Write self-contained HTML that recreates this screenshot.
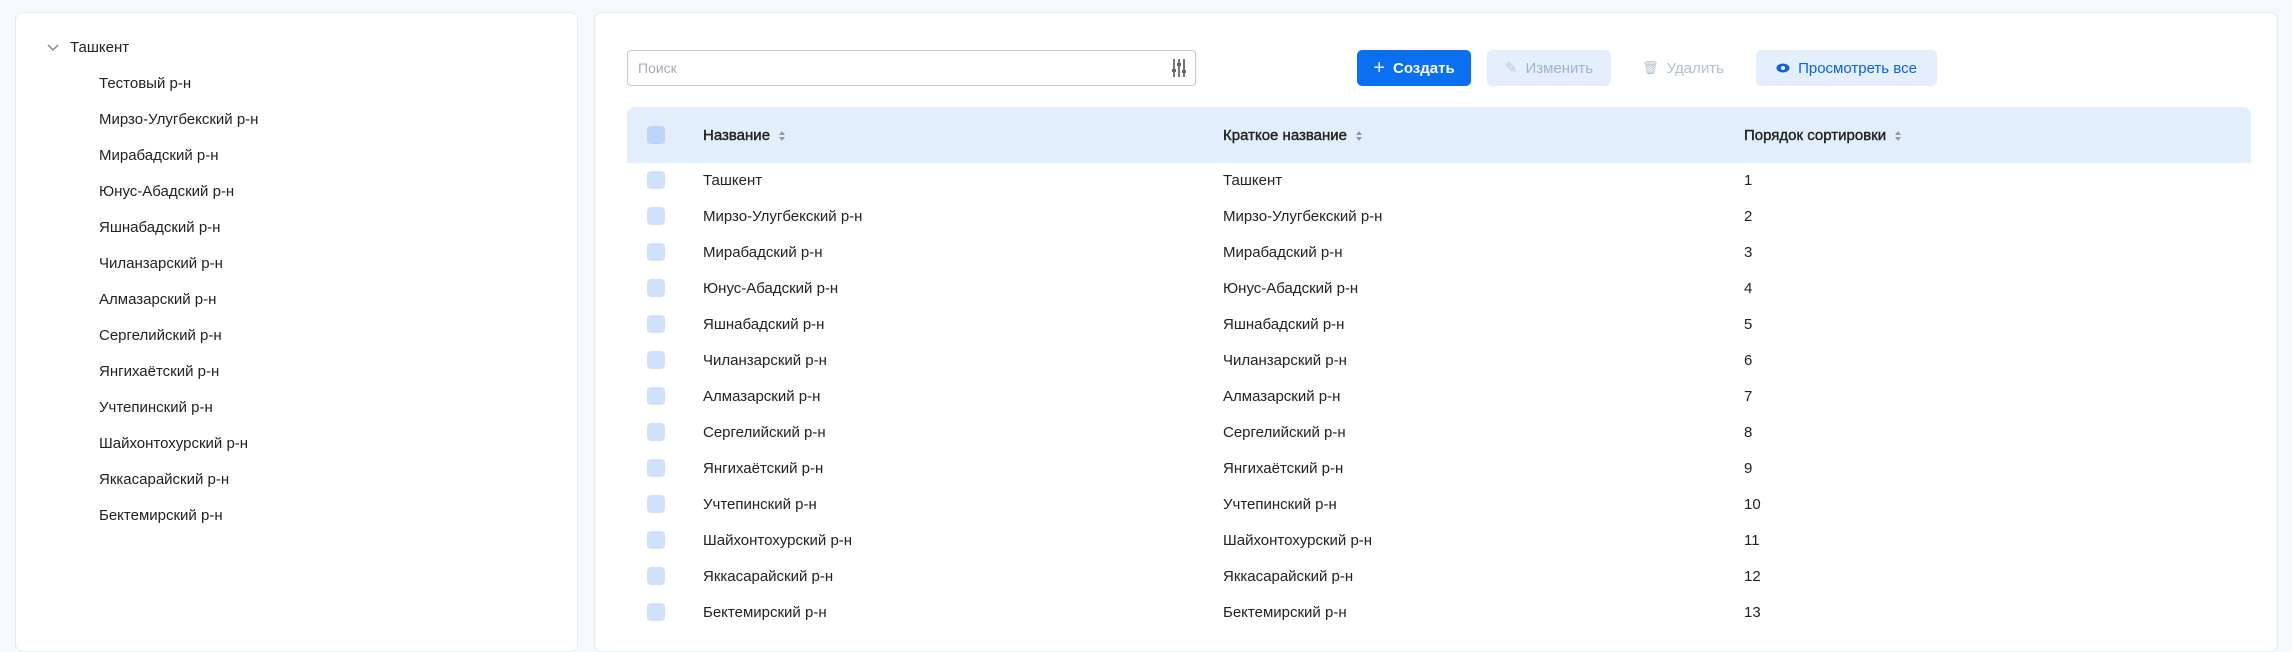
<!DOCTYPE html>
<html><head><meta charset="utf-8"><style>
*{box-sizing:border-box;margin:0;padding:0}
body{width:2292px;height:639px;background:#f7f8fa;font-family:"Liberation Sans",sans-serif;color:#222;font-size:15px;position:relative;overflow:hidden}
.card{position:absolute;background:#fff;border:1px solid #e3ecf7;border-radius:8px}
.abs{position:absolute;white-space:nowrap;line-height:20px}
.cb{position:absolute;width:18px;height:18px;border-radius:4px;background:#cfe1fb}
.btn{position:absolute;top:50px;height:36px;border-radius:5px;display:flex;align-items:center;justify-content:center;font-size:15px;gap:8px}
.sort{display:inline-block;margin-left:8px;vertical-align:middle}
.hd{-webkit-text-stroke:0.4px #222}
</style></head><body>
<div class="card" style="left:15px;top:12px;width:563px;height:640px"></div>
<div class="card" style="left:594px;top:12px;width:1684px;height:640px"></div>

<svg class="abs" style="left:46px;top:43px" width="14" height="10" viewBox="0 0 14 10"><path d="M2 2l5 5 5-5" fill="none" stroke="#888" stroke-width="1.5"/></svg>
<div class="abs" style="left:70px;top:38px">Ташкент</div>
<div id="tree"></div>

<div style="position:absolute;left:627px;top:50px;width:569px;height:36px;border:1px solid #c4c8cf;border-radius:4px"></div>
<div class="abs" style="left:638px;top:58px;color:#aab;font-size:14px">Поиск</div>
<svg class="abs" style="left:1171px;top:58px" width="16" height="20" viewBox="0 0 16 20"><g stroke="#666" stroke-width="1.8"><path d="M3 1v18M8 1v18M13 1v18"/></g><g fill="#666"><rect x="1" y="11" width="4" height="3"/><rect x="6" y="5" width="4" height="3"/><rect x="11" y="12" width="4" height="3"/></g></svg>

<div class="btn" style="left:1357px;width:114px;background:#0a6ff0;color:#fff;font-weight:bold"><span style="font-size:20px;font-weight:normal">+</span>Создать</div>
<div class="btn" style="left:1487px;width:124px;background:#e4eefc;color:#9fb4cf"><span style="color:#b9c7d8">✎</span>Изменить</div>
<div class="btn" style="left:1627px;width:112px;color:#b4c0ce"><span style="font-size:13px">🗑</span>Удалить</div>
<div class="btn" style="left:1756px;width:181px;background:#e4eefc;color:#0a63d8"><svg width="14" height="10" viewBox="0 0 14 10"><ellipse cx="7" cy="5" rx="6.5" ry="4.5" fill="#0a63d8"/><circle cx="7" cy="5" r="2" fill="#fff"/></svg>Просмотреть все</div>

<div style="position:absolute;left:627px;top:107px;width:1624px;height:56px;background:#e3eefc;border-radius:8px 8px 0 0"></div>
<div class="cb" style="left:647px;top:126px;background:#bcd6fb"></div>
<div class="abs hd" style="left:703px;top:126px">Название<svg class="sort" width="8" height="12"><path d="M4 1l3 4H1zM4 11l3-4H1z" fill="#999"/></svg></div>
<div class="abs hd" style="left:1223px;top:126px">Краткое название<svg class="sort" width="8" height="12"><path d="M4 1l3 4H1zM4 11l3-4H1z" fill="#999"/></svg></div>
<div class="abs hd" style="left:1744px;top:126px">Порядок сортировки<svg class="sort" width="8" height="12"><path d="M4 1l3 4H1zM4 11l3-4H1z" fill="#999"/></svg></div>
<div id="rows"></div>
<script>
var t=["Тестовый р-н","Мирзо-Улугбекский р-н","Мирабадский р-н","Юнус-Абадский р-н","Яшнабадский р-н","Чиланзарский р-н","Алмазарский р-н","Сергелийский р-н","Янгихаётский р-н","Учтепинский р-н","Шайхонтохурский р-н","Яккасарайский р-н","Бектемирский р-н"];
var h="";t.forEach(function(s,i){h+='<div class="abs" style="left:99px;top:'+(74+i*36)+'px">'+s+'</div>'});
document.getElementById("tree").innerHTML=h;
var r=["Ташкент"].concat(t.slice(1));h="";
r.forEach(function(s,i){var y=171+i*36;h+='<div class="cb" style="left:647px;top:'+y+'px"></div><div class="abs" style="left:703px;top:'+y+'px">'+s+'</div><div class="abs" style="left:1223px;top:'+y+'px">'+s+'</div><div class="abs" style="left:1744px;top:'+y+'px">'+(i+1)+'</div>'});
document.getElementById("rows").innerHTML=h;
</script>
</body></html>
